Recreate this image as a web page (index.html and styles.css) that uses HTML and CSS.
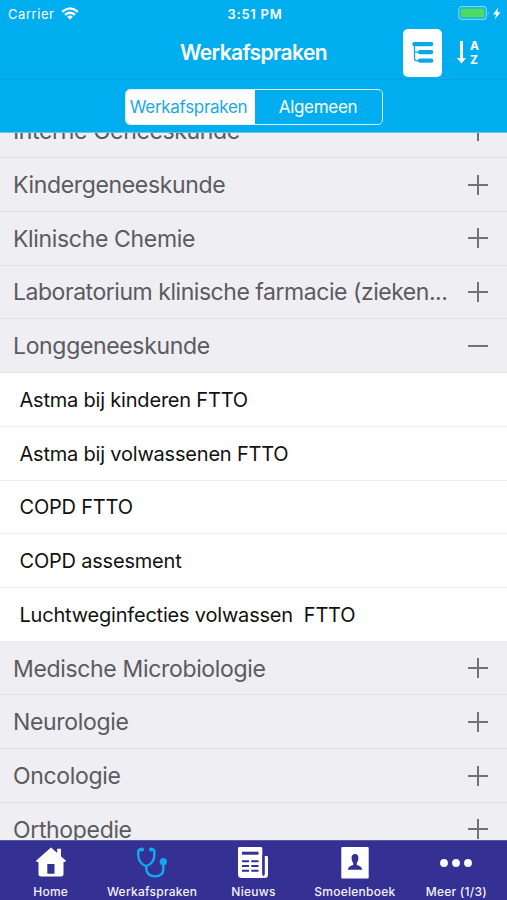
FILE: index.html
```html
<!DOCTYPE html>
<html lang="nl">
<head>
<meta charset="utf-8">
<title>Werkafspraken</title>
<link rel="stylesheet" href="styles.css">
</head>
<body>
<div class="app">
  <header class="header">
    <div class="status">
      <div class="carrier"><span>Carrier</span>
        <svg width="18" height="13" viewBox="0 0 18 13" fill="none" stroke="#fff" stroke-width="2.3"><path d="M1.2 4.8Q9-2 16.8 4.8M4 7.9Q9 3.6 14 7.9"/><path d="M6.2 9.7Q9 7.5 11.8 9.7L9 12.7Z" fill="#fff" stroke="none"/></svg>
      </div>
      <div class="clock">3:51 PM</div>
      <div class="battery">
        <svg width="44" height="16" viewBox="0 0 44 16"><rect x=".7" y=".7" width="27.6" height="12.6" rx="3" fill="none" stroke="#7fd3f4" stroke-width="1.2"/><rect x="2.5" y="2.5" width="24" height="9" rx="1.2" fill="#4cd964"/><path d="M29.8 4.8Q31.7 7 29.8 9.2Z" fill="#7fd3f4"/><path d="M40.2 1.5L35 8.4H38.2L36.7 13.5L42.5 6.2H39.4Z" fill="#fff"/></svg>
      </div>
    </div>
    <div class="nav">
      <h1 class="title">Werkafspraken</h1>
      <div class="actions">
        <div class="tree">
          <svg width="24" height="24" viewBox="0 0 24 24" fill="none" stroke="#0ba9e8" stroke-linecap="round"><path d="M3.3 3.2H20.2M9 11.2H20.2M9 19.7H20.2" stroke-width="4.2"/><path d="M3.5 3V17.5Q3.5 19.7 6 19.7H9M3.5 11.2H9" stroke-width="1.3"/></svg>
        </div>
        <div class="sort">
          <svg width="9" height="24" viewBox="0 0 9 24"><path d="M3 0H6V17H9L4.5 22.5L0 17H3Z" fill="#fff"/></svg>
          <div class="az"><span>A</span><span>Z</span></div>
        </div>
      </div>
    </div>
    <div class="segments">
      <div class="segment active"><span>Werkafspraken</span></div>
      <div class="segment"><span>Algemeen</span></div>
    </div>
  </header>
  <main class="list">
    <div class="row"><span>Interne Geneeskunde</span><i class="plus"></i></div>
    <div class="row"><span>Kindergeneeskunde</span><i class="plus"></i></div>
    <div class="row"><span>Klinische Chemie</span><i class="plus"></i></div>
    <div class="row"><span class="long">Laboratorium klinische farmacie (zieken...</span><i class="plus"></i></div>
    <div class="row"><span>Longgeneeskunde</span><i class="minus"></i></div>
    <div class="row item"><span>Astma bij kinderen FTTO</span></div>
    <div class="row item"><span>Astma bij volwassenen FTTO</span></div>
    <div class="row item"><span>COPD FTTO</span></div>
    <div class="row item"><span>COPD assesment</span></div>
    <div class="row item"><span>Luchtweginfecties volwassen&nbsp; FTTO</span></div>
    <div class="row"><span>Medische Microbiologie</span><i class="plus"></i></div>
    <div class="row"><span>Neurologie</span><i class="plus"></i></div>
    <div class="row"><span>Oncologie</span><i class="plus"></i></div>
    <div class="row"><span>Orthopedie</span><i class="plus"></i></div>
  </main>
  <nav class="tabs">
    <div class="tab">
      <svg width="32" height="34" viewBox="0 0 32 34" fill="#fff"><path fill-rule="evenodd" d="M16 1.5L22.2 7V2.7H26V10.3L31 14.8Q30.5 16.5 28.5 16V28Q28.5 30.5 26 30.5H6Q3.5 30.5 3.5 28V16Q1.5 16.5 1 14.8ZM12.3 18V27.8H19.5V18Z"/></svg>
      <span>Home</span>
    </div>
    <div class="tab">
      <svg width="32" height="34" viewBox="0 0 32 34" fill="none" stroke="#12a9eb" stroke-width="2.5" stroke-linecap="round"><path d="M6.5 3.5H4Q2.3 3.5 2.3 6V10Q3 17.5 10.2 20.2Q17.6 17.5 18.3 10V6Q18.3 3.5 16.8 3.5H14.2"/><path d="M10.2 20.2V22Q10.5 30.3 19 30.3Q27.3 30.3 27.3 23V16"/><circle cx="27.3" cy="15.7" r="3.6" fill="#12a9eb" stroke="none"/><path d="M6 3.5H5.4M15 3.5H15.6" stroke-width="4"/></svg>
      <span>Werkafspraken</span>
    </div>
    <div class="tab">
      <svg width="32" height="34" viewBox="0 0 32 34"><path d="M2.5 1H24Q25.3 1 25.3 2.3V28Q25.3 31 27.5 32H5Q1 32 1 28.5V2.3Q1 1 2.5 1Z" fill="#fff"/><path d="M27.3 10H29.8Q31 10 31 11.2V28.5Q31 32 27.5 32L24 29.5Q27.8 30.5 27.8 27.5V10Z" fill="#fff"/><path d="M26.2 9V27.5Q26.2 29.2 27.2 29.2" fill="none" stroke="#343094" stroke-width="1.5"/><path d="M5 7.2H21.5" stroke="#343094" stroke-width="3"/><path d="M5 15.2H12M14.3 15.2H21.5M5 20H12M14.3 20H21.5M5 24.8H12M14.3 24.8H21.5" stroke="#343094" stroke-width="2.1"/></svg>
      <span>Nieuws</span>
    </div>
    <div class="tab">
      <svg width="32" height="34" viewBox="0 0 32 34"><rect x="2.3" y="1" width="27.4" height="31.5" rx="1" fill="#fff"/><path d="M12.6 12.5Q12.3 8 16 8Q19.7 8 19.4 12.5Q19.3 15.5 17.8 17V19Q22.8 20.3 23.3 23.8H8.7Q9.2 20.3 14.2 19V17Q12.7 15.5 12.6 12.5Z" fill="#343094"/></svg>
      <span>Smoelenboek</span>
    </div>
    <div class="tab">
      <svg width="34" height="34" viewBox="0 0 34 34" fill="#fff"><circle cx="5" cy="17" r="3.9"/><circle cx="17" cy="17" r="3.9"/><circle cx="29" cy="17" r="3.9"/></svg>
      <span>Meer (1/3)</span>
    </div>
  </nav>
</div>
</body>
</html>
```
FILE: styles.css
```css
* { box-sizing: border-box; }
body { margin: 0; font-family: Inter, "Liberation Sans", sans-serif; background: #efeef3; }
.app { width: 507px; height: 900px; display: flex; flex-direction: column; overflow: hidden; }

.header { height: 133px; flex: none; background: #00aeef; color: #fff; border-bottom: 1px solid #5cc6ef; }
.status { height: 26px; display: grid; grid-template-columns: 1fr auto 1fr; align-items: center; padding: 1px 5px 0 8px; font-size: 13px; line-height: 16px; }
.carrier { display: flex; align-items: center; gap: 7px; letter-spacing: .55px; }
.clock { font-weight: 600; letter-spacing: .75px; }
.battery { display: flex; justify-content: flex-end; }
.nav { height: 54px; display: grid; grid-template-columns: 1fr auto 1fr; align-items: center; border-bottom: 1px solid #08a2dd; }
.title { grid-column: 2; margin: 0; font-size: 21px; font-weight: 600; line-height: 26px; letter-spacing: -.6px; }
.actions { display: flex; align-items: center; justify-content: flex-end; gap: 15px; padding-right: 27px; }
.tree { width: 39px; height: 48px; border-radius: 5px; background: #fff; display: flex; align-items: center; justify-content: center; }
.sort { display: flex; align-items: center; gap: 4px; }
.az { display: flex; flex-direction: column; width: 10px; gap: 2px; font-size: 12px; line-height: 12px; font-weight: 700; }
.segments { width: 258px; height: 36px; margin: 9px auto 0; border: 1.5px solid #d9f3fd; border-radius: 5px; display: flex; overflow: hidden; }
.segment { flex: 1; display: flex; align-items: center; justify-content: center; font-size: 17px; letter-spacing: -.3px; }
.active { flex: 0 0 129px; padding-right: 3px; background: #fff; color: #18a9e4; }

.list { flex: 1; min-height: 0; overflow: hidden; }
.row { height: 53.74px; display: flex; align-items: center; justify-content: space-between; padding: 1px 19px 0 13px; border-bottom: 1px solid #e2e1e6; background: #efeef3; color: #5b5b5e; font-size: 23px; letter-spacing: -.34px; white-space: pre; }
.row:first-child { margin-top: -28.6px; }
.long { letter-spacing: -.46px; }
.item { background: #fff; color: #111; font-size: 20px; letter-spacing: -.2px; padding-left: 19.5px; border-color: #ececef; }
.plus, .minus { width: 20px; height: 20px; margin-bottom: 1px; background: linear-gradient(#727275, #727275) center / 20px 2px no-repeat; }
.plus { background: linear-gradient(#727275, #727275) center / 20px 2px no-repeat, linear-gradient(#727275, #727275) center / 2px 20px no-repeat; }

.tabs { height: 60px; flex: none; background: #343094; color: #f4f3fb; display: grid; grid-template-columns: repeat(5, 1fr); border-top: 1px solid #5b58a8; }
.tab { display: flex; flex-direction: column; align-items: center; padding-top: 5px; font-size: 12px; font-weight: 500; line-height: 16px; letter-spacing: .25px; gap: 4px; }
```
